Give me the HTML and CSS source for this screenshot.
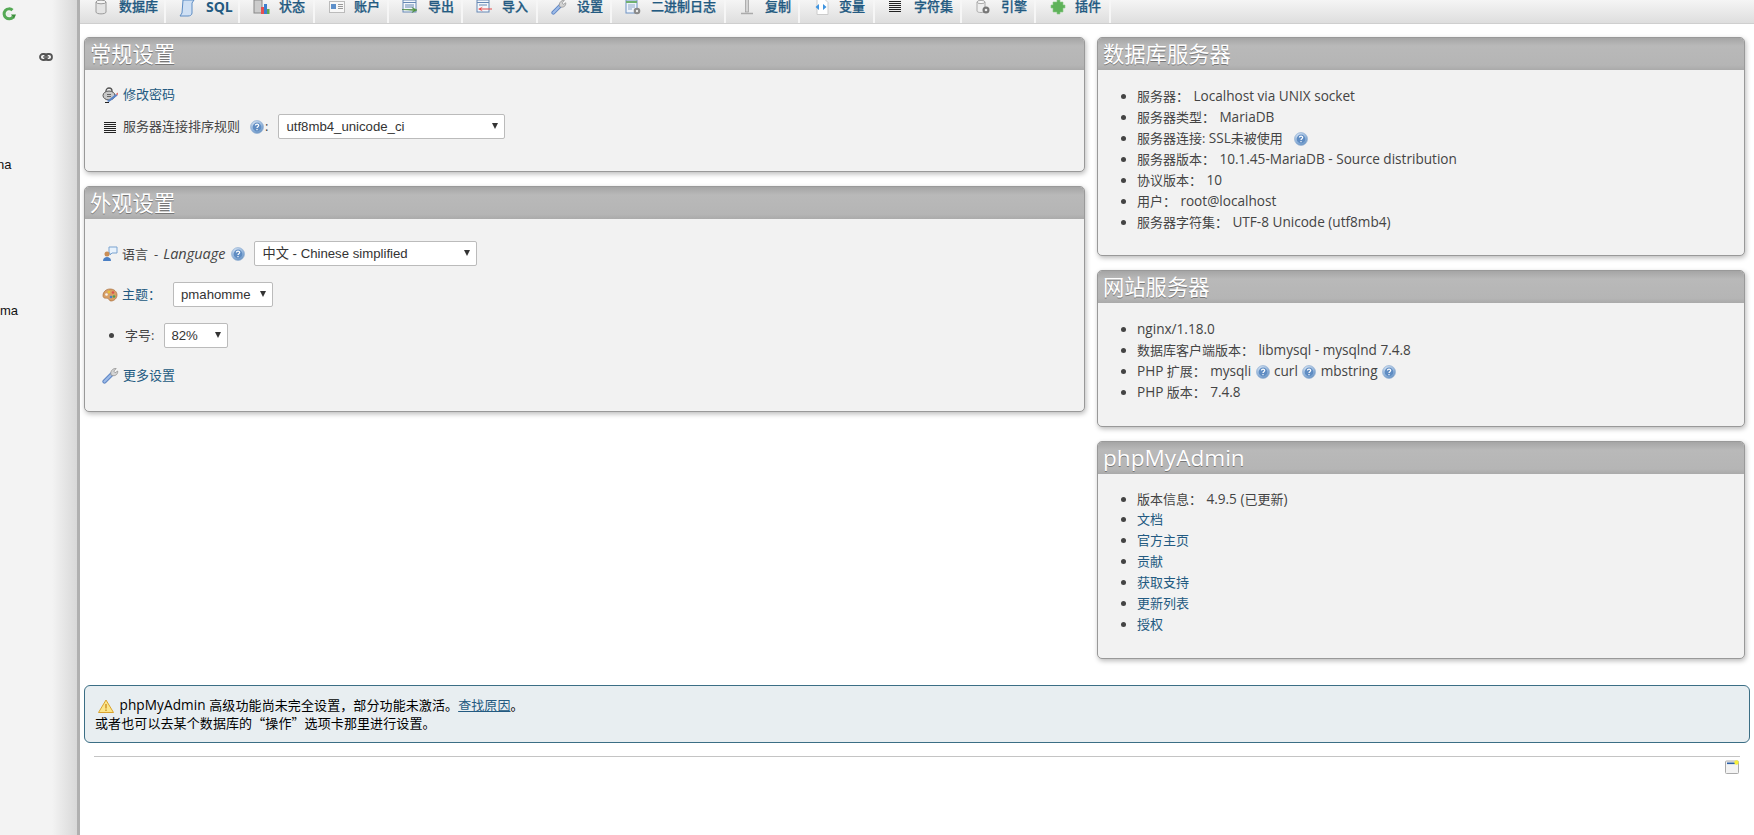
FILE: index.html
```html
<!DOCTYPE html>
<html lang="zh-CN">
<head>
<meta charset="utf-8">
<title>phpMyAdmin</title>
<link rel="stylesheet" href="styles.css">
</head>
<body>
<svg class="defs" width="0" height="0" aria-hidden="true">
  <defs>
    <radialGradient id="hb" cx="40%" cy="30%" r="75%"><stop offset="0" stop-color="#e6eef8"/><stop offset=".65" stop-color="#8fb2da"/><stop offset="1" stop-color="#5d8abc"/></radialGradient>
    <symbol id="help" viewBox="0 0 14 14"><circle cx="7" cy="7" r="6.500" fill="url(#hb)" stroke="#9ab5d6" stroke-width=".7"/><circle cx="7" cy="7" r="4.400" fill="#5f8cc2"/><path d="M5.400 5.600c0-2 3.300-2 3.300 0 0 1.200-1.700 1.200-1.700 2.500" fill="none" stroke="#fff" stroke-width="1.200"/><rect x="6.400" y="9" width="1.200" height="1.200" fill="#fff"/></symbol>
    <symbol id="lines" viewBox="0 0 14 14"><path d="M1 2.500h12M1 4.500h12M1 6.500h12M1 8.500h12M1 10.500h12M1 12.500h12" stroke="#222" stroke-width="1"/></symbol>
    <symbol id="wrench" viewBox="0 0 17 17"><path d="M2.500 14.500 10 7" stroke="#5f86c4" stroke-width="4.200" stroke-linecap="round"/><path d="M2.500 14.500 10 7" stroke="#9dbbe8" stroke-width="2.200" stroke-linecap="round"/><path d="M9 8c-1-3.500 1.500-7 5.200-6.500l-2.400 2.600 1.300 1.700 2.600-1.800c.5 3.500-3 6-6.700 4z" fill="#d4d4d4" stroke="#8a8a8a" stroke-width=".7"/></symbol>
  </defs>
</svg>
<div class="app">
  <aside class="sidebar">
    <svg class="reload" viewBox="0 0 14 14" width="14" height="14"><circle cx="6.500" cy="7" r="2" fill="#e4efe4"/><path d="M10.500 3.200A5 5 0 1 0 11 10" fill="none" stroke="#54a954" stroke-width="3"/><path d="M9 7.500h5L12 12z" fill="#3c8f3c"/></svg>
    <svg class="chain" viewBox="0 0 14 8" width="14" height="8"><rect x="1" y="1" width="7" height="6" rx="3" fill="none" stroke="#555" stroke-width="1.800"/><rect x="6" y="1" width="7" height="6" rx="3" fill="none" stroke="#555" stroke-width="1.800"/><path d="M4 4h6" stroke="#777" stroke-width="1.500"/></svg>
    <span class="db db-a">na</span>
    <span class="db db-b">ma</span>
  </aside>
  <main class="main">
    <nav class="tabs">
      <a class="tab t1" href="#"><svg viewBox="0 0 14 16" width="14" height="16"><path d="M2 3v10c0 2.500 10 2.500 10 0V3z" fill="#e4e4e4" stroke="#9a9a9a"/><ellipse cx="7" cy="3" rx="5" ry="1.800" fill="#f4f4f4" stroke="#9a9a9a"/></svg><span>数据库</span></a>
      <a class="tab t2" href="#"><svg viewBox="0 0 16 18" width="16" height="18"><path d="M4 1h11l-2 3v10c0 2-2 3-4 3H1l2-3z" fill="#cfe0f4" stroke="#5c8cc4"/></svg><span class="sql">SQL</span></a>
      <a class="tab t3" href="#"><svg viewBox="0 0 17 16" width="17" height="16"><rect x="1" y="1" width="8" height="13" fill="#ccc" stroke="#888"/><rect x="8" y="8" width="3" height="7" fill="#e65050"/><rect x="11" y="5" width="3" height="10" fill="#3d7fd0"/><rect x="14" y="10" width="2.500" height="5" fill="#5cab4f"/></svg><span>状态</span></a>
      <a class="tab t4" href="#"><svg viewBox="0 0 16 12" width="16" height="12"><rect x=".5" y=".5" width="15" height="11" fill="#f7f7f7" stroke="#bbb"/><rect x="2" y="3" width="5" height="5" fill="#5d8fc9"/><path d="M9 3.500h5M9 5.500h5M9 7.500h5" stroke="#999"/></svg><span>账户</span></a>
      <a class="tab t5" href="#"><svg viewBox="0 0 16 14" width="16" height="14"><rect x="1" y="1" width="13" height="12" fill="#f4f7fb" stroke="#6688b4"/><path d="M1 3.500h13M3 6h9M3 8h9" stroke="#6688b4"/><path d="M0 10.500h12l-2-2 5 2.500-5 2.500 2-2z" fill="#4d9a3e" stroke="#3f7f33" stroke-width=".5"/></svg><span>导出</span></a>
      <a class="tab t6" href="#"><svg viewBox="0 0 16 14" width="16" height="14"><rect x="1" y="1" width="12" height="12" fill="#f4f7fb" stroke="#6688b4"/><path d="M1 3.500h12M3 6h8" stroke="#6688b4"/><path d="M16 9.500H5l2-2-5 2.500 5 2.500-2-2h11z" fill="#e74c4c"/></svg><span>导入</span></a>
      <a class="tab t7" href="#"><svg width="16" height="16"><use href="#wrench"/></svg><span>设置</span></a>
      <a class="tab t8" href="#"><svg viewBox="0 0 16 16" width="16" height="16"><rect x="1" y="1" width="11" height="13" fill="#eef3fa" stroke="#6f93c4"/><path d="M1 3h11" stroke="#70b070" stroke-width="2"/><path d="M3 6h7M3 8h7M3 10h4" stroke="#8fa9cc"/><circle cx="12" cy="12" r="3.300" fill="#8a8a8a"/><circle cx="12" cy="12" r="1.200" fill="#eee"/></svg><span>二进制日志</span></a>
      <a class="tab t9" href="#"><svg viewBox="0 0 14 16" width="14" height="16"><rect x="5.500" y="0" width="3" height="13" fill="#d4d4d4" stroke="#999" stroke-width=".7"/><path d="M1 14.500h12" stroke="#aaa" stroke-width="1.500"/></svg><span>复制</span></a>
      <a class="tab t10" href="#"><svg viewBox="0 0 16 16" width="16" height="16"><path d="M4 .5h8l3 3v12H4z" fill="#fff" stroke="#ccc"/><path d="M6 5 2.500 8 6 11zM10 5l3.500 3-3.500 3z" fill="#3f94e0"/></svg><span>变量</span></a>
      <a class="tab t11" href="#"><svg width="14" height="14"><use href="#lines"/></svg><span>字符集</span></a>
      <a class="tab t12" href="#"><svg viewBox="0 0 16 16" width="16" height="16"><path d="M2 3v9c0 2 8 2 8 0V3z" fill="#eee" stroke="#aaa"/><ellipse cx="6" cy="3" rx="4" ry="1.600" fill="#f8f8f8" stroke="#aaa"/><circle cx="11" cy="11" r="3.500" fill="#777"/><circle cx="11" cy="11" r="1.300" fill="#eee"/></svg><span>引擎</span></a>
      <a class="tab t13" href="#"><svg viewBox="0 0 16 16" width="16" height="16"><path d="M5 3h2V1h3v2h3v3h2v3h-2v4h-3v2H7v-2H3V9H1V6h2V3z" fill="#5fb25a" stroke="#8ccb87" stroke-width=".6"/></svg><span>插件</span></a>
    </nav>
    <div class="content">
      <div class="columns">
        <div class="col">
          <section class="panel p-general">
            <h2>常规设置</h2>
            <div class="body form">
              <div class="row r-pass">
                <svg viewBox="0 0 17 16" width="17" height="16"><path d="M4 5.500V4a3 3 0 0 1 6 0v1.500" fill="none" stroke="#555" stroke-width="1.300"/><ellipse cx="7" cy="8.500" rx="6" ry="4.500" fill="#c8c8c8" stroke="#555"/><path d="M5 7.500h4M5 9.500h4" stroke="#666"/><path d="M5 14 14 7l1.500 1.500L7 15z" fill="#5a84c8"/><path d="M14 7l2-1.500-.5 3z" fill="#d9534f"/><path d="M3 15.500h4" stroke="#222"/></svg>
                <a href="#">修改密码</a>
              </div>
              <div class="row r-coll">
                <svg class="ic-lines" width="14" height="14"><use href="#lines"/></svg>
                <span class="lbl">服务器连接排序规则</span>
                <svg class="help h-coll" width="14" height="14"><use href="#help"/></svg><span class="colon">:</span>
                <span class="select s-coll">utf8mb4_unicode_ci<i></i></span>
              </div>
            </div>
          </section>
          <section class="panel p-look">
            <h2>外观设置</h2>
            <div class="body form">
              <div class="row r-lang">
                <svg viewBox="0 0 16 16" width="16" height="16"><path d="M7 1h8v6H10l-2 2V7H7z" fill="#e8f2fc" stroke="#7aa3d0"/><circle cx="5" cy="8" r="2.500" fill="#c98d55"/><path d="M1 15c0-3 2-4 4-4s4 1 4 4z" fill="#4a7fc4"/></svg>
                <span class="lbl">语言<span class="dash">-</span><em>Language</em></span>
                <svg class="help h-lang" width="14" height="14"><use href="#help"/></svg>
                <span class="select s-lang">中文 - Chinese simplified<i></i></span>
              </div>
              <div class="row r-theme">
                <svg viewBox="0 0 16 16" width="16" height="16"><path d="M8 2c4 0 7 2.500 7 6s-3 6-6 6c-2 0-1.500-2-3-2.500S1 12 1 8.500 4 2 8 2z" fill="#d9a066" stroke="#a86f3c" stroke-width=".7"/><circle cx="7" cy="5" r="1.300" fill="#e8c23a"/><circle cx="11" cy="5.500" r="1.300" fill="#d9534f"/><circle cx="12" cy="9.500" r="1.300" fill="#4f9f4f"/><circle cx="4.500" cy="7.500" r="1.300" fill="#f3f3f3"/><circle cx="9" cy="10" r="1.300" fill="#4a7fc4"/></svg>
                <a href="#">主题：</a>
                <span class="select s-theme">pmahomme<i></i></span>
              </div>
              <div class="row r-size">
                <span class="bullet"></span>
                <span class="lbl-size">字号:</span>
                <span class="select s-size">82%<i></i></span>
              </div>
              <div class="row r-more">
                <svg width="17" height="17"><use href="#wrench"/></svg>
                <a href="#">更多设置</a>
              </div>
            </div>
          </section>
        </div>
        <div class="col">
          <section class="panel p-db">
            <h2>数据库服务器</h2>
            <ul class="body">
              <li>服务器： <span class="val">Localhost via UNIX socket</span></li>
              <li>服务器类型： <span class="val">MariaDB</span></li>
              <li>服务器连接: <span class="lat">SSL</span>未被使用 <svg class="help h-ssl" width="14" height="14"><use href="#help"/></svg></li>
              <li>服务器版本： <span class="val">10.1.45-MariaDB - Source distribution</span></li>
              <li>协议版本： <span class="val">10</span></li>
              <li>用户： <span class="val">root@localhost</span></li>
              <li>服务器字符集： <span class="val">UTF-8 Unicode (utf8mb4)</span></li>
            </ul>
          </section>
          <section class="panel p-web">
            <h2>网站服务器</h2>
            <ul class="body">
              <li><span class="lat">nginx/1.18.0</span></li>
              <li>数据库客户端版本： <span class="val">libmysql - mysqlnd 7.4.8</span></li>
              <li><span class="lat">PHP</span> 扩展： <span class="val">mysqli</span> <svg class="help" width="14" height="14"><use href="#help"/></svg> <span class="lat">curl</span> <svg class="help" width="14" height="14"><use href="#help"/></svg> <span class="lat">mbstring</span> <svg class="help" width="14" height="14"><use href="#help"/></svg></li>
              <li><span class="lat">PHP</span> 版本： <span class="val">7.4.8</span></li>
            </ul>
          </section>
          <section class="panel p-pma">
            <h2 class="h-lat">phpMyAdmin</h2>
            <ul class="body">
              <li>版本信息： <span class="val">4.9.5 (</span>已更新<span class="lat">)</span></li>
              <li><a href="#">文档</a></li>
              <li><a href="#">官方主页</a></li>
              <li><a href="#">贡献</a></li>
              <li><a href="#">获取支持</a></li>
              <li><a href="#">更新列表</a></li>
              <li><a href="#">授权</a></li>
            </ul>
          </section>
        </div>
      </div>
      <div class="notice">
        <svg viewBox="0 0 16 14" width="16" height="14"><path d="M8 1 15.500 13.500H.5z" fill="#fbe58a" stroke="#d9a22e"/><path d="M8 5v4.500M8 10.500v1.500" stroke="#c98a1c" stroke-width="1.300"/></svg>
        <span class="lat">phpMyAdmin</span> 高级功能尚未完全设置，部分功能未激活。<a href="#">查找原因</a>。<br>
        <span class="cjk">或者也可以去某个数据库的“操作”选项卡那里进行设置。</span>
      </div>
      <hr class="rule">
      <div class="foot">
        <svg viewBox="0 0 14 14" width="14" height="14"><rect x=".5" y="1" width="13" height="12.500" rx="1" fill="#f3f3f3" stroke="#aaa"/><rect x="2" y="2.500" width="8" height="1.600" fill="#2b5fa8"/><circle cx="11.500" cy="2.500" r="2.200" fill="#f7f03a"/></svg>
      </div>
    </div>
  </main>
</div>
</body>
</html>
```
FILE: styles.css
```css
* { box-sizing: border-box; }
html, body { margin: 0; height: 100%; overflow: hidden; background: #fff; }
body { font: 13px/21px "Open Sans", "Noto Sans CJK SC", sans-serif; color: #444; }
a { color: #235a81; text-decoration: none; }
.defs { position: absolute; }
svg { flex: none; }
.val, .lat { font-size: 13.6px; }
.val { margin-left: 1px; }
.cjk { font-family: "Noto Sans CJK SC", sans-serif; }

.app { display: flex; height: 835px; }

.sidebar { position: relative; flex: 0 0 80px; border-right: 3px solid #b0b0b0; background: linear-gradient(to right, #f3f3f3 0, #f3f3f3 52px, #d8d8d8 77px); color: #111; font-family: "Liberation Sans", sans-serif; }
.reload { position: absolute; left: 2px; top: 7px; }
.chain { position: absolute; left: 39px; top: 53px; }
.db { position: absolute; font-size: 13px; line-height: 15px; }
.db-a { left: -3px; top: 157px; }
.db-b { left: 0; top: 303px; }

.main { flex: 1; min-width: 0; }

.tabs { display: flex; height: 24px; background: linear-gradient(#f5f5f5, #dedede); border-bottom: 1px solid #cfcfcf; }
.tab { display: grid; grid-template-columns: 39px auto; justify-content: start; align-items: start; height: 23px; border-right: 2px solid #f6f6f6; font-weight: 500; font-size: 13px; line-height: 14px; color: #235a81; -webkit-text-stroke: .25px #235a81; }
.tab svg { margin: -1px 0 0 13px; }
.tab span { margin-top: -1px; }
.tab .sql { margin: 0 0 0 1px; font-family: "Open Sans", sans-serif; font-size: 14px; line-height: 13px; font-weight: 700; -webkit-text-stroke: 0; }
.t1 { width: 86px; }
.t2 { width: 74px; }
.t3 { width: 75px; }
.t4 { width: 74px; }
.t5 { width: 74px; }
.t6 { width: 75px; }
.t7 { width: 74px; }
.t8 { width: 114px; }
.t9 { width: 74px; }
.t10 { width: 75px; }
.t11 { width: 87px; }
.t12 { width: 74px; }
.t13 { width: 75px; }
.t1 svg, .t4 svg, .t9 svg, .t13 svg { margin-left: 14px; }
.t4 svg { margin-top: 1px; }

.content { padding: 13px 4px 0 4px; }
.columns { display: grid; grid-template-columns: 1001px 648px; column-gap: 12px; align-items: start; }
.col { display: flex; flex-direction: column; gap: 14px; }
.panel { border: 1px solid #999; border-radius: 5px; background: #f2f2f2; box-shadow: 1px 2px 5px #bbb; overflow: hidden; }
.panel h2 { margin: 0; height: 32px; padding: 0 0 0 5px; background: linear-gradient(#a5a5a5, #b9b9b9 25%, #b5b5b5 85%, #aaa); color: #fff; font: 400 21.3px/32px "Open Sans", "Noto Sans CJK SC", sans-serif; text-shadow: 0 1px 0 #777; }
.panel h2.h-lat { font-size: 22.6px; }
.p-general { height: 135px; }
.p-look { height: 226px; }
.p-db { height: 219px; }
.p-web { height: 157px; }
.p-pma { height: 218px; }

ul.body { margin: 0; padding: 15px 0 0 39px; list-style: disc; }
.p-pma ul.body { padding-top: 14px; }
ul.body li { height: 21px; }
ul.body li::marker { font-size: 13px; color: #444; }
.help { vertical-align: -3px; margin: 0 1px; }
.h-ssl { margin-left: 8px; }

.form { padding: 0 0 0 17px; }
.row { display: flex; align-items: center; }
.row > a { margin-left: 4px; }
.lbl { margin-left: 4px; }
.lbl-size { margin-left: 11px; }
.dash { margin: 0 5px 0 6px; }
.lbl em { font-size: 14.5px; }
.r-pass { margin-top: 14px; height: 21px; }
.r-coll { margin-top: 9px; height: 25px; }
.r-coll .ic-lines { margin: 0 2px 0 1px; }
.help.h-coll { margin: 0 0 0 10px; }
.colon { margin-left: 1px; }
.r-lang { margin-top: 22px; height: 25px; }
.r-lang .lbl { margin-top: 1px; }
.help.h-lang { margin: 0 0 0 5px; }
.r-theme { margin-top: 16px; height: 25px; }
.r-size { margin-top: 16px; height: 25px; }
.r-more { margin-top: 17px; height: 21px; }
.bullet { width: 5px; height: 5px; margin: 0 0 0 7px; border-radius: 50%; background: #444; }

.select { position: relative; display: block; height: 25px; border: 1px solid #bbb; border-radius: 2px; background: #fff; font: 13.2px/23px "Liberation Sans", "Noto Sans CJK SC", sans-serif; color: #333; padding-left: 7px; }
.select i { position: absolute; right: 6px; top: 8px; width: 0; height: 0; border-left: 3px solid transparent; border-right: 3px solid transparent; border-top: 6px solid #333; }
.s-coll { width: 227px; margin-left: 10px; }
.s-lang { width: 223px; margin-left: 9px; padding-left: 8px; }
.s-theme { width: 100px; margin-left: 12px; }
.s-size { width: 64px; margin-left: 10px; padding-left: 6px; }

.notice { height: 58px; margin-top: 26px; width: 1666px; padding: 10px 0 0 10px; border: 1px solid #3b6e85; border-radius: 6px; background: #e8eef1; color: #000; font: 13px/17px "Open Sans", "Noto Sans CJK SC", sans-serif; letter-spacing: .1px; }
.notice svg { vertical-align: 0; margin: -3px 2px -3px 3px; }
.notice a { text-decoration: underline; }

.rule { margin: 13px 10px 0; height: 0; width: 1646px; border: 0; border-top: 1px solid #c4c4c4; }
.foot { display: flex; justify-content: flex-end; padding: 3px 15px 0 0; width: 1670px; }
```
